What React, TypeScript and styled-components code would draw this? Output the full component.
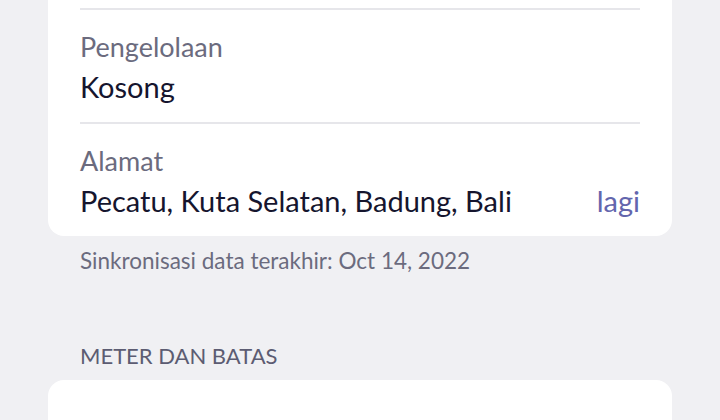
import styled, { createGlobalStyle } from "styled-components";

const GlobalStyle = createGlobalStyle`
  html, body {
    margin: 0;
    padding: 0;
    background-color: #f0f0f3;
    font-family: Lato, "Noto Sans", sans-serif;
  }
  * {
    box-sizing: border-box;
  }
`;

interface IRow {
  label: string;
  value: string;
  more?: string;
}

const rows: IRow[] = [
  { label: "Pengelolaan", value: "Kosong" },
  { label: "Alamat", value: "Pecatu, Kuta Selatan, Badung, Bali", more: "lagi" },
];

export default function App() {
  return (
    <>
      <GlobalStyle />
      <Page>
        <InfoCard>
          {rows.map((row) => (
            <InfoRow key={row.label}>
              <Label>{row.label}</Label>
              <Value>
                <span>{row.value}</span>
                {row.more && <MoreLink>{row.more}</MoreLink>}
              </Value>
            </InfoRow>
          ))}
        </InfoCard>
        <SyncNote>Sinkronisasi data terakhir: Oct 14, 2022</SyncNote>
        <SectionTitle>METER DAN BATAS</SectionTitle>
        <EmptyCard />
      </Page>
    </>
  );
}

const Page = styled.div`
  min-height: 100vh;
  padding: 0 48px;
  background-color: #f0f0f3;
  overflow: hidden;
`;

const InfoCard = styled.div`
  background-color: #ffffff;
  border-radius: 0 0 16px 16px;
  padding: 8px 32px 0;
`;

const InfoRow = styled.div`
  display: flex;
  flex-direction: column;
  gap: 7px;
  height: 114px;
  padding-top: 22px;
  border-top: 2px solid #e6e6ea;
`;

const Label = styled.div`
  font-size: 27px;
  line-height: 30px;
  color: #6b6b7e;
`;

const Value = styled.div`
  display: flex;
  justify-content: space-between;
  align-items: baseline;
  font-size: 29px;
  line-height: 36px;
  color: #15152e;
`;

const MoreLink = styled.span`
  color: #6366ad;
  cursor: pointer;
`;

const SyncNote = styled.div`
  padding: 11px 32px 0;
  font-size: 22.5px;
  line-height: 28px;
  color: #6b6b7e;
`;

const SectionTitle = styled.div`
  margin-top: 68px;
  padding: 0 32px;
  font-size: 22px;
  line-height: 26px;
  color: #5c5c72;
`;

const EmptyCard = styled.div`
  margin-top: 11px;
  height: 200px;
  background-color: #ffffff;
  border-radius: 16px;
`;
